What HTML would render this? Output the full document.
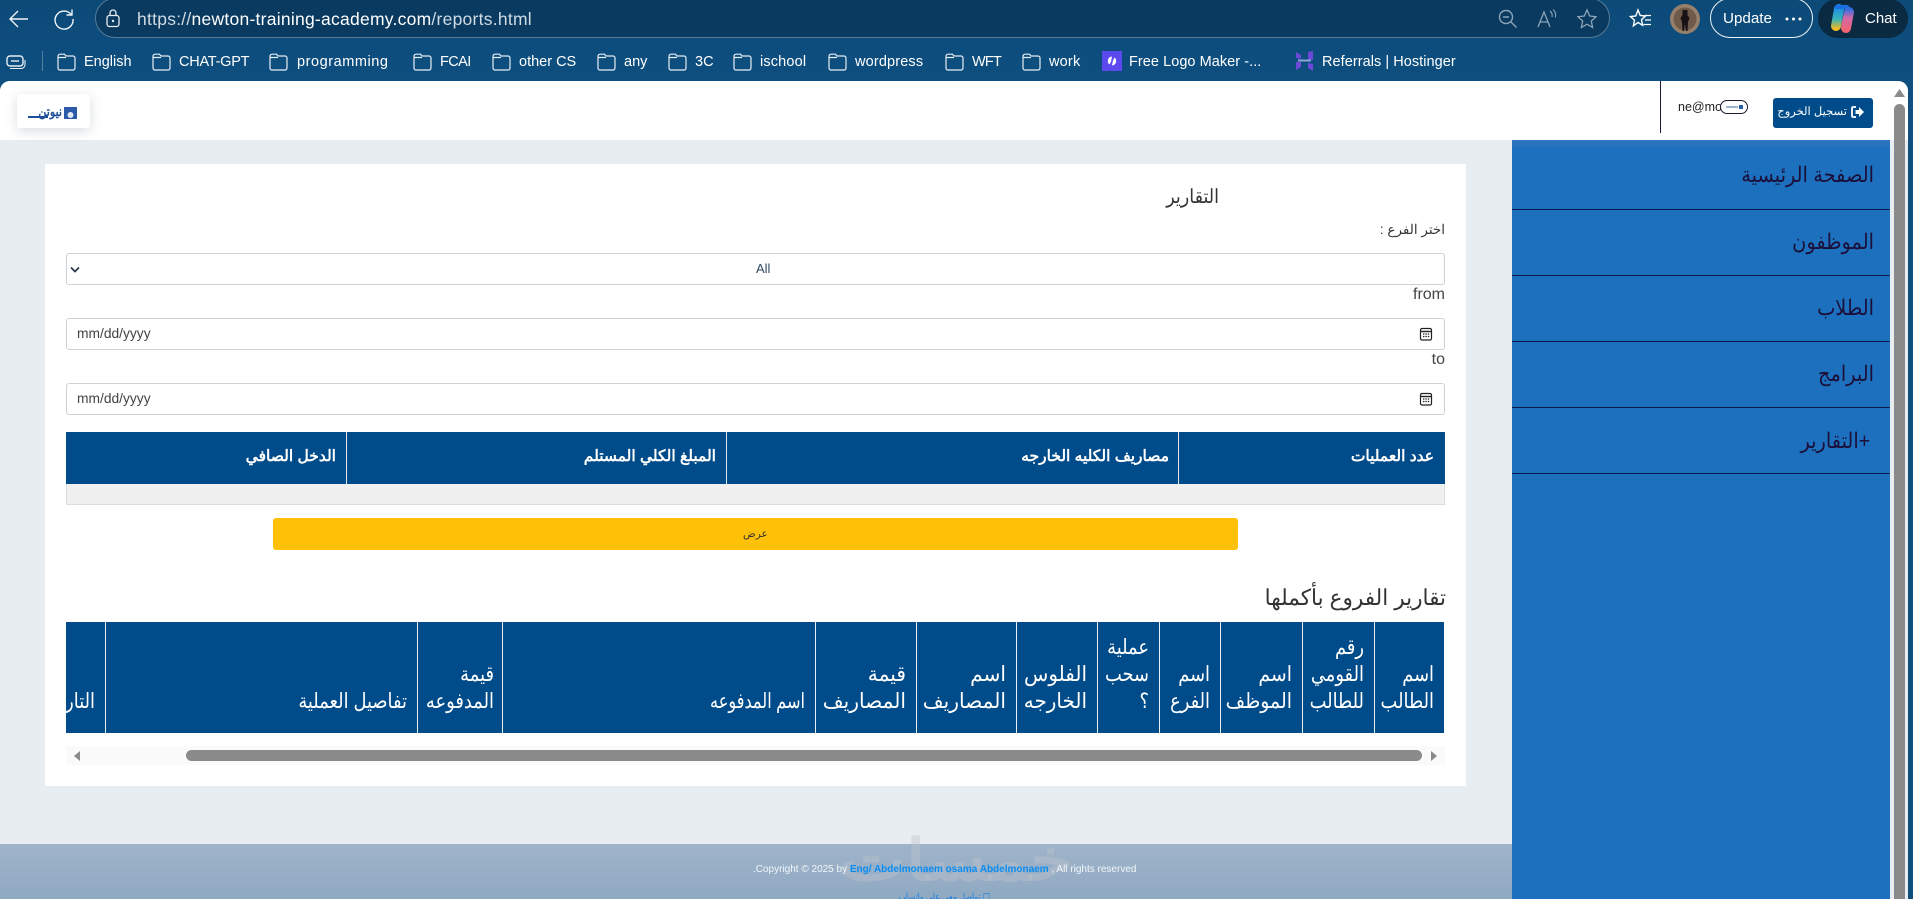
<!DOCTYPE html>
<html lang="ar"><head><meta charset="utf-8"><title>Reports</title>
<style>
*{box-sizing:border-box}
html,body{margin:0;padding:0;width:1913px;height:899px;overflow:hidden;background:#0e4f80;font-family:"Liberation Sans",Arial,sans-serif}
#w{position:relative;width:1913px;height:899px;overflow:hidden}
.a{position:absolute}
.t{position:absolute;white-space:nowrap;line-height:1}
.r{direction:rtl;text-align:right;transform-origin:100% 50%}
.bm{position:absolute;top:54px;font-size:14.5px;color:#fff;line-height:16px;white-space:nowrap}
.fd{position:absolute;top:53px;width:19px;height:18px}
.side{position:absolute;left:1512px;width:378px;height:66px;border-bottom:1px solid #0b1a4e}
.sn{left:1512px;width:362px;font-size:21.5px;color:#1b0f3a;line-height:26px;transform:scaleX(.9)}
.inp{position:absolute;left:66px;width:1379px;height:32px;background:#fff;border:1px solid #cdd2d8;border-radius:3px}
.th{position:absolute;top:0;height:111px;border-left:1px solid #e8eef4;color:#fff;font-size:21px;line-height:27px;direction:rtl;text-align:right;padding:0 10px 18px 4px;display:flex;flex-direction:column;justify-content:flex-end;white-space:nowrap}
.th div{transform:scaleX(.85);transform-origin:100% 50%}
.h1{top:448px;font-size:15.5px;font-weight:bold;color:#fff;line-height:18px}
</style></head><body><div id="w">
<svg width="0" height="0" style="position:absolute"><defs>
<symbol id="f" viewBox="0 0 19 18"><path d="M1 4.500V15a2 2 0 0 0 2 2h13a2 2 0 0 0 2-2V5a2 2 0 0 0-2-2H9L7.500 1.200H3A2 2 0 0 0 1 3.200V4.500H9" fill="none" stroke="#e6edf3" stroke-width="1.200"/></symbol>
<symbol id="c" viewBox="0 0 14 14"><rect x="1.500" y="1.500" width="11" height="11.500" rx="1.500" fill="none" stroke="#222" stroke-width="1.200"/><path d="M2 4.500h10" stroke="#222" stroke-width="1.400"/><path d="M4 7h1.400M6.400 7h1.400M8.800 7h1.400M4 9.500h1.400M6.400 9.500h1.400M8.800 9.500h1.400" stroke="#222" stroke-width="1.200"/></symbol>
</defs></svg>

<!-- browser chrome -->
<div class="a" style="left:0;top:0;width:1913px;height:81px;background:linear-gradient(#0c4a78,#0e4f80)"></div>
<svg class="a" style="left:8px;top:8px" width="22" height="22" viewBox="0 0 22 22"><path d="M20 11H2M10 3l-8 8 8 8" fill="none" stroke="#eef3f7" stroke-width="1.400"/></svg>
<svg class="a" style="left:53px;top:8px" width="22" height="22" viewBox="0 0 22 22"><path d="M18.500 7A9 9 0 1 0 20 11M13.500 7H19V1.500" fill="none" stroke="#eef3f7" stroke-width="1.400"/></svg>
<div class="a" style="left:95px;top:-2px;width:1515px;height:40px;background:#0a3a5f;border:1px solid #587b97;border-radius:20px"></div>
<svg class="a" style="left:105px;top:9px" width="16" height="20" viewBox="0 0 16 20"><rect x="2" y="6.500" width="12" height="11" rx="2.500" fill="none" stroke="#e6edf3" stroke-width="1.300"/><path d="M5 6.500V4a3 3 0 0 1 6 0v2.500" fill="none" stroke="#e6edf3" stroke-width="1.300"/><circle cx="8" cy="12" r="1.200" fill="#e6edf3"/></svg>
<div class="t" style="left:137px;top:10px;font-size:17.5px;letter-spacing:.25px;color:#fff;line-height:19px"><span style="color:#cfdbe5">https://</span>newton-training-academy.com<span style="color:#cfdbe5">/reports.html</span></div>
<svg class="a" style="left:1497px;top:8px" width="22" height="22" viewBox="0 0 22 22"><circle cx="9" cy="9" r="6.500" fill="none" stroke="#8ca5b9" stroke-width="1.400"/><path d="M6 9h6M13.500 13.500l6 6" stroke="#8ca5b9" stroke-width="1.400"/></svg>
<svg class="a" style="left:1536px;top:8px" width="22" height="22" viewBox="0 0 22 22"><path d="M2 19L8 4l6 15M4.500 14h7" fill="none" stroke="#8ca5b9" stroke-width="1.300"/><path d="M14 3c2 1.500 2.500 3.500 2 6M17 1.500c2.500 2 3 5 2.300 8" fill="none" stroke="#8ca5b9" stroke-width="1.100"/></svg>
<svg class="a" style="left:1576px;top:8px" width="22" height="22" viewBox="0 0 22 22"><path d="M11 2l2.700 6 6.300.7-4.700 4.300 1.300 6.500L11 16.200 5.400 19.500 6.700 13 2 8.700 8.300 8z" fill="none" stroke="#8ca5b9" stroke-width="1.300"/></svg>
<svg class="a" style="left:1629px;top:8px" width="24" height="22" viewBox="0 0 24 22"><path d="M9 2l2.200 5.500 5.300.5-4 3.700 1.100 5.600L9 14.500l-4.600 3.300 1.100-5.600-4-3.700 5.300-.5z" fill="none" stroke="#fff" stroke-width="1.400"/><path d="M16 7.500h6M16 12h6M14.500 16.500h7.500" stroke="#fff" stroke-width="1.200"/></svg>
<svg class="a" style="left:1670px;top:4px" width="30" height="30" viewBox="0 0 30 30"><circle cx="15" cy="15" r="15" fill="#96806c"/><circle cx="15" cy="15" r="11.500" fill="#6f5a49"/><path d="M12.500 6h5v5l2 3-1.500 4-.5 9h-1.500l-1-7-1 7h-1.500l-.5-9L10.500 14l2-3z" fill="#171214"/></svg>
<div class="a" style="left:1710px;top:-2px;width:103px;height:40px;border:1.500px solid #f0f4f7;border-radius:20px"></div>
<div class="t" style="left:1723px;top:10px;font-size:15.2px;color:#fff;line-height:18px">Update</div>
<svg class="a" style="left:1785px;top:17px" width="17" height="4"><circle cx="2" cy="2" r="1.500" fill="#fff"/><circle cx="8.500" cy="2" r="1.500" fill="#fff"/><circle cx="15" cy="2" r="1.500" fill="#fff"/></svg>
<div class="a" style="left:1818px;top:-1px;width:90px;height:39px;background:#0a2a42;border-radius:20px"></div>
<svg class="a" style="left:1829px;top:4px" width="28" height="30" viewBox="0 0 28 30"><defs><linearGradient id="g1" gradientUnits="userSpaceOnUse" x1="0" y1="3" x2="0" y2="25"><stop offset="0" stop-color="#1a8de8"/><stop offset=".55" stop-color="#38b2b8"/><stop offset="1" stop-color="#f5b91f"/></linearGradient><linearGradient id="g2" gradientUnits="userSpaceOnUse" x1="0" y1="5" x2="0" y2="27"><stop offset="0" stop-color="#2f6fe0"/><stop offset=".4" stop-color="#d06aa8"/><stop offset="1" stop-color="#f3646f"/></linearGradient></defs><path d="M10 5L7 22" stroke="url(#g1)" stroke-width="10" stroke-linecap="round" fill="none"/><path d="M8 3h10" stroke="#1a6fe0" stroke-width="4" stroke-linecap="round"/><path d="M20 8l-3 16" stroke="url(#g2)" stroke-width="10" stroke-linecap="round" fill="none"/></svg>
<div class="t" style="left:1865px;top:10px;font-size:15px;color:#fff;line-height:18px">Chat</div>

<!-- bookmarks -->
<svg class="a" style="left:6px;top:54px" width="20" height="16" viewBox="0 0 20 16"><rect x="1" y="2" width="16" height="10" rx="3" fill="none" stroke="#e6edf3" stroke-width="1.400"/><path d="M5 7h8" stroke="#e6edf3" stroke-width="1.400"/><path d="M4 14.500h11a4 4 0 0 0 4-4V6" fill="none" stroke="#e6edf3" stroke-width="1.100"/></svg>
<div class="a" style="left:42px;top:51px;width:1px;height:20px;background:#53809f"></div>
<svg class="fd" style="left:57px"><use href="#f"/></svg><div class="bm" style="left:84px">English</div>
<svg class="fd" style="left:152px"><use href="#f"/></svg><div class="bm" style="left:179px;letter-spacing:-.25px">CHAT-GPT</div>
<svg class="fd" style="left:269px"><use href="#f"/></svg><div class="bm" style="left:297px;letter-spacing:.55px">programming</div>
<svg class="fd" style="left:413px"><use href="#f"/></svg><div class="bm" style="left:440px;letter-spacing:-.6px">FCAI</div>
<svg class="fd" style="left:492px"><use href="#f"/></svg><div class="bm" style="left:519px">other CS</div>
<svg class="fd" style="left:597px"><use href="#f"/></svg><div class="bm" style="left:624px">any</div>
<svg class="fd" style="left:668px"><use href="#f"/></svg><div class="bm" style="left:695px">3C</div>
<svg class="fd" style="left:733px"><use href="#f"/></svg><div class="bm" style="left:760px;letter-spacing:.15px">ischool</div>
<svg class="fd" style="left:828px"><use href="#f"/></svg><div class="bm" style="left:855px;letter-spacing:.15px">wordpress</div>
<svg class="fd" style="left:945px"><use href="#f"/></svg><div class="bm" style="left:972px;letter-spacing:-.8px">WFT</div>
<svg class="fd" style="left:1022px"><use href="#f"/></svg><div class="bm" style="left:1049px;letter-spacing:.2px">work</div>
<svg class="a" style="left:1102px;top:51px" width="20" height="20" viewBox="0 0 20 20"><rect width="20" height="20" fill="#5b49ee"/><path d="M10 5.500a4.500 4.500 0 0 0-2.500 8l1.500-3zM10 14.500a4.500 4.500 0 0 0 2.500-8l-1.500 3z" fill="#fff"/></svg>
<div class="bm" style="left:1129px;letter-spacing:.05px">Free Logo Maker -...</div>
<svg class="a" style="left:1295px;top:51px" width="19" height="20" viewBox="0 0 19 20"><path d="M1 1l5 3v4l-5-1zM13 1l5-1v9h-5zM1 11h5v5l-5 3zM13 12l5 1v7l-5-3z" fill="#6a4ad6"/><path d="M3 9.500h13" stroke="#8fa6d8" stroke-width="2"/></svg>
<div class="bm" style="left:1322px;letter-spacing:.05px">Referrals | Hostinger</div>

<!-- page -->
<div class="a" style="left:0;top:81px;width:1908px;height:818px;background:#e8edf1;border-radius:10px 10px 0 0;overflow:hidden">
  <div class="a" style="left:0;top:0;width:1908px;height:59px;background:#fff"></div>
</div>
<!-- logo -->
<div class="a" style="left:17px;top:94px;width:73px;height:34px;background:#fff;border-radius:3px;box-shadow:0 3px 12px rgba(60,80,100,.2)"></div>
<svg class="a" style="left:64px;top:107px" width="13" height="12" viewBox="0 0 13 12"><rect width="13" height="12" fill="#2a5aa8"/><circle cx="6.500" cy="8" r="3" fill="#dfe8f2"/></svg>
<div class="t" style="left:28px;top:105px;font-size:13px;font-weight:bold;color:#1d4f9c;direction:rtl;width:34px;text-align:right;transform:scaleX(.85);transform-origin:right">نيوتن</div>
<div class="a" style="left:28px;top:116px;width:20px;height:2px;background:#1d4f9c"></div>
<!-- right header -->
<div class="a" style="left:1660px;top:81px;width:1px;height:52px;background:#22123a"></div>
<div class="t" style="left:1678px;top:100px;font-size:12.5px;color:#222;line-height:14px">ne@mo</div>
<div class="a" style="left:1720px;top:100px;width:28px;height:14px;border:1px solid #1c1a2e;border-radius:7px;background:#fff"></div>
<div class="a" style="left:1726px;top:106px;width:12px;height:2px;background:#9db3d2"></div>
<div class="a" style="left:1739px;top:105px;width:4px;height:4px;background:#2a5aa8"></div>
<div class="a" style="left:1773px;top:98px;width:100px;height:30px;background:#004b8a;border-radius:3px"></div>
<div class="t r" style="left:1770px;width:77px;top:105px;font-size:11.500px;color:#fff;line-height:14px">تسجيل الخروج</div>
<svg class="a" style="left:1851px;top:106px" width="13" height="12" viewBox="0 0 13 12"><path d="M5 1H2a1 1 0 0 0-1 1v8a1 1 0 0 0 1 1h3" fill="none" stroke="#fff" stroke-width="1.800"/><path d="M4.500 4h3.500V1l5 5-5 5V8H4.500z" fill="#fff"/></svg>

<!-- sidebar -->
<div class="a" style="left:1512px;top:140px;width:378px;height:759px;background:#1c70bd"></div>
<div class="a" style="left:1512px;top:140px;width:378px;height:9px;background:linear-gradient(#3079bf,#1c70bd)"></div>
<div class="side" style="top:144px"></div><div class="side" style="top:210px"></div><div class="side" style="top:276px"></div><div class="side" style="top:342px"></div><div class="side" style="top:408px"></div>
<div class="t r sn" style="top:162px">الصفحة الرئيسية</div>
<div class="t r sn" style="top:229px">الموظفون</div>
<div class="t r sn" style="top:295px">الطلاب</div>
<div class="t r sn" style="top:361px">البرامج</div>
<div class="t r sn" style="top:428px;width:358px">+التقارير</div>

<!-- scrollbar -->
<svg class="a" style="left:1893px;top:88px" width="13" height="10"><path d="M6.500 1L12 9H1z" fill="#8a8a8a"/></svg>
<div class="a" style="left:1894px;top:104px;width:11px;height:795px;background:#8a8a8a;border-radius:6px 6px 0 0"></div>

<!-- card -->
<div class="a" style="left:45px;top:164px;width:1421px;height:622px;background:#fff"></div>
<div class="t r" style="left:900px;width:319px;top:185px;font-size:19.500px;color:#333;line-height:25px;transform:scaleX(.9)">التقارير</div>
<div class="t r" style="left:1200px;width:245px;top:221px;font-size:13.500px;color:#333;line-height:17px">اختر الفرع :</div>
<div class="inp" style="top:253px"></div>
<svg class="a" style="left:70px;top:266px" width="10" height="7"><path d="M1 1.500l4 4 4-4" fill="none" stroke="#26374a" stroke-width="1.700"/></svg>
<div class="t" style="left:756px;top:261px;font-size:13px;color:#2f4a60;line-height:15px">All</div>
<div class="t r" style="left:1300px;width:145px;top:286px;font-size:16px;color:#444;line-height:18px">from</div>
<div class="inp" style="top:318px"></div>
<div class="t" style="left:77px;top:326px;font-size:13.800px;color:#444;line-height:16px">mm/dd/yyyy</div>
<svg class="a" style="left:1419px;top:327px" width="14" height="14"><use href="#c"/></svg>
<div class="t r" style="left:1300px;width:145px;top:351px;font-size:16px;color:#444;line-height:18px">to</div>
<div class="inp" style="top:383px"></div>
<div class="t" style="left:77px;top:391px;font-size:13.800px;color:#444;line-height:16px">mm/dd/yyyy</div>
<svg class="a" style="left:1419px;top:392px" width="14" height="14"><use href="#c"/></svg>

<!-- table 1 -->
<div class="a" style="left:66px;top:432px;width:1379px;height:52px;background:#004b8a"></div>
<div class="a" style="left:66px;top:484px;width:1379px;height:21px;background:#f0f0f0;border:1px solid #ddd;border-top:0"></div>
<div class="a" style="left:346px;top:432px;width:1px;height:52px;background:#dfe8f0"></div>
<div class="a" style="left:726px;top:432px;width:1px;height:52px;background:#dfe8f0"></div>
<div class="a" style="left:1178px;top:432px;width:1px;height:52px;background:#dfe8f0"></div>
<div class="t r h1" style="left:1180px;width:254px">عدد العمليات</div>
<div class="t r h1" style="left:730px;width:439px">مصاريف الكليه الخارجه</div>
<div class="t r h1" style="left:350px;width:366px">المبلغ الكلي المستلم</div>
<div class="t r h1" style="left:70px;width:266px">الدخل الصافي</div>

<!-- button -->
<div class="a" style="left:273px;top:518px;width:965px;height:32px;background:#ffc107;border-radius:3px"></div>
<div class="t" style="left:743px;top:527px;font-size:10.500px;color:#333;line-height:14px;direction:rtl">عرض</div>

<!-- heading 2 -->
<div class="t r" style="left:1100px;width:346px;top:583px;font-size:22px;color:#333;line-height:30px;transform:scaleX(.98)">تقارير الفروع بأكملها</div>

<!-- table 2 -->
<div class="a" style="left:66px;top:622px;width:1378px;height:111px;background:#004b8a;overflow:hidden">
  <div class="th" style="left:1308px;width:70px"><div>اسم<br>الطالب</div></div>
  <div class="th" style="left:1236px;width:72px"><div>رقم<br>القومي<br>للطالب</div></div>
  <div class="th" style="left:1154px;width:82px"><div style="transform:scaleX(.9)">اسم<br>الموظف</div></div>
  <div class="th" style="left:1093px;width:61px"><div>اسم<br>الفرع</div></div>
  <div class="th" style="left:1031px;width:62px"><div>عملية<br>سحب<br>؟</div></div>
  <div class="th" style="left:950px;width:81px"><div style="transform:scaleX(.95)">الفلوس<br>الخارجه</div></div>
  <div class="th" style="left:850px;width:100px"><div style="transform:scaleX(.96)">اسم<br>المصاريف</div></div>
  <div class="th" style="left:749px;width:101px"><div style="transform:scaleX(.96)">قيمة<br>المصاريف</div></div>
  <div class="th" style="left:436px;width:313px"><div style="transform:scaleX(.77)">اسم المدفوعه</div></div>
  <div class="th" style="left:351px;width:85px;padding-right:8px"><div>قيمة<br>المدفوعه</div></div>
  <div class="th" style="left:39px;width:312px"><div>تفاصيل العملية</div></div>
  <div class="th" style="left:-60px;width:99px;border-left:0"><div>التاريخ</div></div>
</div>

<!-- h scrollbar -->
<div class="a" style="left:66px;top:746px;width:1379px;height:19px;background:#fafafa"></div>
<svg class="a" style="left:73px;top:751px" width="8" height="10"><path d="M7 0v10L1 5z" fill="#8a8a8a"/></svg>
<svg class="a" style="left:1430px;top:751px" width="8" height="10"><path d="M1 0v10l6-5z" fill="#8a8a8a"/></svg>
<div class="a" style="left:186px;top:750px;width:1236px;height:11px;background:#8a8a8a;border-radius:6px"></div>

<!-- footer -->
<div class="a" style="left:0;top:844px;width:1512px;height:55px;background:linear-gradient(#9fb4ca,#8fa9c2)"></div>
<div class="t" style="left:840px;top:820px;font-size:70px;font-weight:bold;color:rgba(190,195,205,.42);line-height:72px;direction:rtl;transform:scaleY(.82);transform-origin:50% 60px">خمسات</div>
<div class="t" style="left:753px;top:864px;font-size:10px;color:#f2f6fa;line-height:12px;direction:ltr">.Copyright © 2025 by <b style="color:#0a8df0;font-weight:bold">Eng/ Abdelmonaem osama Abdelmonaem</b> , All rights reserved</div>
<div class="t r" style="left:850px;width:140px;top:892px;font-size:9.500px;color:#0a7ee8;line-height:12px;transform:scaleX(.84)">☐ تواصل معي على واتساب</div>
</div></body></html>
